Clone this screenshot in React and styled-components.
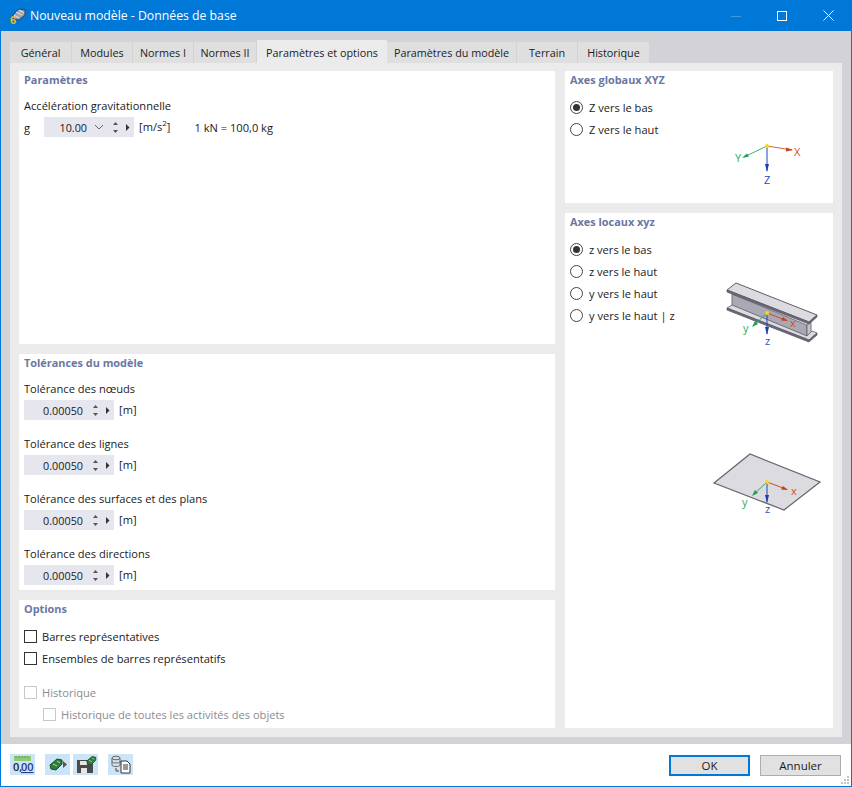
import React from "react";
import styled, { createGlobalStyle } from "styled-components";

const Global = createGlobalStyle`
  html, body { margin: 0; padding: 0; background: #fff; }
  * { box-sizing: border-box; }
`;

const Window = styled.div`
  width: 852px;
  height: 787px;
  display: flex;
  flex-direction: column;
  border: 1px solid #0078d7;
  border-top: none;
  font-family: "Open Sans", "Noto Sans", sans-serif;
  font-size: 11.1px;
  color: #1a1a1a;
  overflow: hidden;
`;

const TitleBar = styled.div`
  height: 31px;
  flex: none;
  background: #0078d7;
  color: #fff;
  display: flex;
  align-items: center;
  padding-left: 8px;
  font-size: 12.25px;
`;

const TitleText = styled.span`
  margin-left: 3px;
  flex: 1;
`;

const WinButton = styled.div`
  width: 46px;
  height: 31px;
  display: flex;
  align-items: center;
  justify-content: center;
`;

const Body = styled.div`
  flex: 1;
  background: #d3d2d6;
  padding: 9px 9px 7px;
  display: flex;
  flex-direction: column;
`;

const Tabs = styled.div`
  display: flex;
  align-items: flex-end;
  height: 23px;
  flex: none;
`;

const Tab = styled.div`
  width: ${(p) => p.$w}px;
  height: ${(p) => (p.$active ? 24 : 21)}px;
  margin-right: ${(p) => (p.$active ? 0 : 1)}px;
  margin-bottom: ${(p) => (p.$active ? -1 : 0)}px;
  background: ${(p) => (p.$active ? "#ebebeb" : "#dfdfe0")};
  display: flex;
  align-items: center;
  justify-content: center;
  font-size: 10.8px;
  color: #222;
  position: relative;
`;

const TabPanel = styled.div`
  flex: 1;
  background: #ebebeb;
  padding: 8px 9px 9px;
  display: grid;
  grid-template-columns: 536px 268px;
  column-gap: 10px;
`;

const Column = styled.div`
  display: flex;
  flex-direction: column;
  gap: 10px;
  min-height: 0;
`;

const Panel = styled.section`
  background: #fff;
  height: ${(p) => (p.$h ? `${p.$h}px` : "auto")};
  flex: ${(p) => (p.$h ? "none" : 1)};
  padding: 1px 5px 0;
  display: flow-root;
`;

const PanelTitle = styled.h3`
  margin: 0;
  font-size: 10.9px;
  line-height: 15px;
  font-weight: 700;
  color: #6a77a3;
`;

const FieldLabel = styled.div`
  line-height: 16px;
  margin-top: ${(p) => p.$top}px;
`;

const FieldRow = styled.div`
  display: flex;
  align-items: center;
  height: 20px;
  margin-top: 3px;
`;

const GravLetter = styled.span`
  width: 20px;
`;

const Spin = styled.div`
  width: 90px;
  height: 20px;
  background: #e6e6ef;
  display: flex;
  align-items: center;
  position: relative;
`;

const SpinValue = styled.span`
  position: absolute;
  right: ${(p) => p.$right}px;
  top: 2px;
  line-height: 17px;
  font-size: 10.8px;
`;

const SpinIcon = styled.svg`
  position: absolute;
  left: ${(p) => p.$x}px;
  top: 0;
`;

const Unit = styled.span`
  margin-left: 5px;
  line-height: 20px;

  sup {
    font-size: 8px;
    line-height: 0;
  }
`;

const Conversion = styled.span`
  margin-left: 24px;
`;

const OptionList = styled.div`
  margin-top: ${(p) => p.$top}px;
  display: flex;
  flex-direction: column;
  gap: 6px;
`;

const OptionRow = styled.label`
  display: flex;
  align-items: center;
  height: 16px;
  color: ${(p) => (p.$off ? "#8b8b8f" : "#1a1a1a")};
  margin-left: ${(p) => (p.$indent ? 19 : 0)}px;
  margin-top: ${(p) => p.$gap || 0}px;
`;

const Radio = styled.span`
  width: 13px;
  height: 13px;
  border-radius: 50%;
  border: 1px solid #444;
  margin-right: 6px;
  display: flex;
  align-items: center;
  justify-content: center;
  flex: none;

  &::after {
    content: "";
    display: ${(p) => (p.$on ? "block" : "none")};
    width: 7px;
    height: 7px;
    border-radius: 50%;
    background: #333;
  }
`;

const Check = styled.span`
  width: 13px;
  height: 13px;
  border: 1px solid ${(p) => (p.$off ? "#c8c8c8" : "#333")};
  margin-right: 5px;
  flex: none;
`;

const AxesRow = styled.div`
  display: flex;
  justify-content: flex-end;
  margin-top: 2px;
  padding-right: 23px;
`;

const LocalBody = styled.div`
  display: flex;
  justify-content: space-between;
`;

const Drawings = styled.div`
  display: flex;
  flex-direction: column;
  align-items: flex-end;
  margin-right: 7px;
  padding-top: 53px;
  gap: 103px;
`;

const Footer = styled.div`
  height: 42px;
  flex: none;
  display: flex;
  align-items: flex-start;
  padding: 10px 10px 0 9px;
  position: relative;
`;

const ToolButton = styled.div`
  width: 25px;
  height: 21px;
  background: #cce4f7;
  margin-right: ${(p) => p.$mr}px;
  display: flex;
  align-items: center;
  justify-content: center;
`;

const Spacer = styled.div`
  flex: 1;
`;

const DialogButton = styled.button`
  width: 81px;
  height: 21px;
  margin-top: 1px;
  margin-left: ${(p) => p.$ml || 0}px;
  padding: 0;
  background: #e1e1e1;
  border: ${(p) => (p.$primary ? "2px solid #0078d7" : "1px solid #adadad")};
  font: inherit;
  font-size: 11.5px;
  color: #1a1a1a;
`;

const Grip = styled.svg`
  position: absolute;
  right: 1px;
  bottom: 1px;
`;

const SpinArrows = ({ x }) => (
  <SpinIcon $x={x} width="20" height="20" viewBox="0 0 20 20">
    <path d="M3 8 L5.5 5 L8 8Z" fill="#555" />
    <path d="M3 13 L8 13 L5.5 16Z" fill="#555" />
    <path d="M16 7 L16 14 L19.5 10.5Z" fill="#333" />
  </SpinIcon>
);

const SpinField = ({ value }) => (
  <Spin>
    <SpinValue $right={31}>{value}</SpinValue>
    <SpinArrows x={66} />
  </Spin>
);

const Tolerance = ({ label, top }) => (
  <>
    <FieldLabel $top={top}>{label}</FieldLabel>
    <FieldRow>
      <SpinField value="0.00050" />
      <Unit>[m]</Unit>
    </FieldRow>
  </>
);

const AppIcon = () => (
  <svg width="18" height="18" viewBox="0 0 18 18">
    <path d="M4 8 L10 2 L16 3 L16 8 L10 13 L4 12Z" fill="#9ca3ad" stroke="#3c3f46" strokeWidth="1" />
    <path d="M7 5 L13 8 M10 3 L15 6 M5 8 L10 11" stroke="#e5e7ea" strokeWidth="1" fill="none" />
    <text x="1" y="17" fontSize="11" fontWeight="700" fill="#eebb22" fontFamily="Liberation Sans, sans-serif">6</text>
  </svg>
);

const Marker = ({ x, y }) => <circle cx={x} cy={y} r="2" fill="#f6d90f" />;

const GlobalAxes = () => (
  <svg width="72" height="48" viewBox="0 0 72 48">
    <path d="M34 7 L59 11" stroke="#c9663f" strokeWidth="1" />
    <path d="M60 11 L53 8.5 L53 12.5Z" fill="#c8401a" />
    <path d="M34 7 L11 18" stroke="#3fb36a" strokeWidth="1" />
    <path d="M9 19 L14 14.5 L16 17.5Z" fill="#1e9e50" />
    <path d="M34 7 L34 32" stroke="#2347b5" strokeWidth="1" />
    <path d="M34 33 L32 25 L36 25Z" fill="#1c3fb0" />
    <Marker x={34} y={7} />
    <text x="61" y="17" fontSize="11" fill="#d0502a" fontFamily="Open Sans, sans-serif">X</text>
    <text x="2" y="23" fontSize="11" fill="#33a860" fontFamily="Open Sans, sans-serif">Y</text>
    <text x="31" y="45" fontSize="11" fill="#2a50c0" fontFamily="Open Sans, sans-serif">Z</text>
  </svg>
);

const BeamDrawing = () => (
  <svg width="97" height="68" viewBox="0 0 97 68">
    <path d="M8 12 L8 26 L83 56 L83 43Z" fill="#a9a8b5" stroke="#5d5c68" strokeWidth="0.8" />
    <path d="M83 43 L87 40 L87 54 L83 56Z" fill="#c5c4cc" stroke="#5d5c68" strokeWidth="0.8" />
    <path d="M3 26 L8 23 L83 54 L88 49 L93 51 L85 58Z" fill="#dcdbe0" stroke="#5d5c68" strokeWidth="0.8" />
    <path d="M3 26 L3 28 L85 60 L93 53 L93 51 L85 58Z" fill="#6a6975" stroke="#5d5c68" strokeWidth="0.8" />
    <path d="M3 8 L12 1 L93 33 L85 40Z" fill="#dcdbe0" stroke="#5d5c68" strokeWidth="1" />
    <path d="M3 8 L3 10 L85 42 L93 35 L93 33 L85 40Z" fill="#6a6975" stroke="#5d5c68" strokeWidth="0.8" />
    <path d="M43 31 L63 38.5" stroke="#c9502a" strokeWidth="1" />
    <path d="M64 39 L57 38.5 L59 35Z" fill="#c8401a" />
    <path d="M43 31 L29 44" stroke="#2fa860" strokeWidth="1" />
    <path d="M28 45 L31 39 L34 42Z" fill="#1e9e50" />
    <path d="M43 31 L43 52" stroke="#2347b5" strokeWidth="1" />
    <path d="M43 53 L41 45 L45 45Z" fill="#1c3fb0" />
    <Marker x={43} y={31} />
    <text x="66" y="45" fontSize="11" fill="#d0502a" fontFamily="Open Sans, sans-serif">x</text>
    <text x="19" y="50" fontSize="11" fill="#33a860" fontFamily="Open Sans, sans-serif">y</text>
    <text x="41" y="63" fontSize="11" fill="#2a50c0" fontFamily="Open Sans, sans-serif">z</text>
  </svg>
);

const PlateDrawing = () => (
  <svg width="108" height="64" viewBox="0 0 108 64">
    <path d="M1 30 L37 1 L107 29 L71 57Z" fill="#dcdbe0" stroke="#65646f" strokeWidth="1.2" />
    <path d="M54 29 L74 36.5" stroke="#c9502a" strokeWidth="1" />
    <path d="M75 37 L68 36.5 L70 33Z" fill="#c8401a" />
    <path d="M54 29 L40 42" stroke="#2fa860" strokeWidth="1" />
    <path d="M39 43 L42 37 L45 40Z" fill="#1e9e50" />
    <path d="M54 29 L54 49" stroke="#2347b5" strokeWidth="1" />
    <path d="M54 50 L52 42 L56 42Z" fill="#1c3fb0" />
    <Marker x={54} y={29} />
    <text x="78" y="42" fontSize="11" fill="#d0502a" fontFamily="Open Sans, sans-serif">x</text>
    <text x="29" y="53" fontSize="11" fill="#33a860" fontFamily="Open Sans, sans-serif">y</text>
    <text x="52" y="60" fontSize="11" fill="#2a50c0" fontFamily="Open Sans, sans-serif">z</text>
  </svg>
);

const NumberIcon = () => (
  <svg width="25" height="21" viewBox="0 0 25 21">
    <rect x="4" y="2" width="17" height="5" fill="#8fca78" />
    <path d="M6 2v2M9 2v2M12 2v2M15 2v2M18 2v2" stroke="#5c9a50" strokeWidth="1" />
    <text x="3" y="17" fontSize="11" fontWeight="600" fill="#223" fontFamily="Open Sans, sans-serif">0,</text>
    <text x="11" y="17" fontSize="11" fontWeight="600" fill="#223a90" textDecoration="underline" fontFamily="Open Sans, sans-serif">00</text>
  </svg>
);

const ModelGlyph = ({ x = 0, y = 0, s = 1 }) => (
  <g transform={`translate(${x} ${y}) scale(${s})`}>
    <path d="M1 8 L8 2 L13 3 L13 7 L7 13 L2 12Z" fill="#2f7d3a" stroke="#1d4a24" strokeWidth="1" />
    <path d="M4 7 L8 9 M8 4 L11 6" stroke="#bcd9b6" strokeWidth="1" />
  </g>
);

const ImportIcon = () => (
  <svg width="25" height="21" viewBox="0 0 25 21">
    <ModelGlyph x={4} y={3} />
    <path d="M18 7 L18 14 L22 10.5Z" fill="#555" />
  </svg>
);

const SaveIcon = () => (
  <svg width="25" height="21" viewBox="0 0 25 21">
    <path d="M4 6 H17 L20 9 V19 H4Z" fill="#4a4a4a" />
    <rect x="7" y="7" width="7" height="4" fill="#e6e6e6" />
    <rect x="8" y="14" width="6" height="5" fill="#e6e6e6" />
    <ModelGlyph x={13} y={1} s={0.75} />
  </svg>
);

const DataIcon = () => (
  <svg width="25" height="21" viewBox="0 0 25 21">
    <ellipse cx="8" cy="4" rx="4" ry="1.8" fill="#ddd" stroke="#666" />
    <path d="M4 4 V11 C4 13 12 13 12 11 V4 M4 7.5 C4 9.5 12 9.5 12 7.5" fill="none" stroke="#666" />
    <path d="M8 14 V17 H11" fill="none" stroke="#444" />
    <path d="M13 7 H19 L22 10 V19 H13Z" fill="#fff" stroke="#333" />
    <path d="M15 11 H20 M15 13 H20 M15 15 H20" stroke="#333" />
  </svg>
);

const App = () => {
  const tabs = [
    ["Général", 61],
    ["Modules", 60],
    ["Normes I", 60],
    ["Normes II", 62],
    ["Paramètres et options", 130, true],
    ["Paramètres du modèle", 129],
    ["Terrain", 60],
    ["Historique", 71],
  ];

  return (
    <Window>
      <Global />
      <TitleBar>
        <AppIcon />
        <TitleText>Nouveau modèle - Données de base</TitleText>
        <WinButton>
          <svg width="10" height="10" viewBox="0 0 10 10"><path d="M0 5.5H10" stroke="#3f9be2" /></svg>
        </WinButton>
        <WinButton>
          <svg width="10" height="10" viewBox="0 0 10 10"><rect x="0.5" y="0.5" width="9" height="9" fill="none" stroke="#fff" /></svg>
        </WinButton>
        <WinButton>
          <svg width="11" height="11" viewBox="0 0 11 11"><path d="M0.5 0.5L10.5 10.5M10.5 0.5L0.5 10.5" stroke="#fff" /></svg>
        </WinButton>
      </TitleBar>

      <Body>
        <Tabs>
          {tabs.map(([label, w, active]) => (
            <Tab key={label} $w={w} $active={active}>{label}</Tab>
          ))}
        </Tabs>
        <TabPanel>
          <Column>
            <Panel $h={273}>
              <PanelTitle>Paramètres</PanelTitle>
              <FieldLabel $top={11}>Accélération gravitationnelle</FieldLabel>
              <FieldRow>
                <GravLetter>g</GravLetter>
                <Spin>
                  <SpinValue $right={47}>10.00</SpinValue>
                  <SpinIcon $x={50} width="12" height="20" viewBox="0 0 12 20">
                    <path d="M1 8 L5 12 L9 8" fill="none" stroke="#666" />
                  </SpinIcon>
                  <SpinArrows x={66} />
                </Spin>
                <Unit>[m/s<sup>2</sup>]</Unit>
                <Conversion>1 kN = 100,0 kg</Conversion>
              </FieldRow>
            </Panel>

            <Panel $h={236}>
              <PanelTitle>Tolérances du modèle</PanelTitle>
              <Tolerance label="Tolérance des nœuds" top={11} />
              <Tolerance label="Tolérance des lignes" top={16} />
              <Tolerance label="Tolérance des surfaces et des plans" top={16} />
              <Tolerance label="Tolérance des directions" top={16} />
            </Panel>

            <Panel>
              <PanelTitle>Options</PanelTitle>
              <OptionList $top={12}>
                <OptionRow><Check />Barres représentatives</OptionRow>
                <OptionRow><Check />Ensembles de barres représentatifs</OptionRow>
                <OptionRow $off $gap={12}><Check $off />Historique</OptionRow>
                <OptionRow $off $indent><Check $off />Historique de toutes les activités des objets</OptionRow>
              </OptionList>
            </Panel>
          </Column>

          <Column>
            <Panel $h={132}>
              <PanelTitle>Axes globaux XYZ</PanelTitle>
              <OptionList $top={12}>
                <OptionRow><Radio $on />Z vers le bas</OptionRow>
                <OptionRow><Radio />Z vers le haut</OptionRow>
              </OptionList>
              <AxesRow><GlobalAxes /></AxesRow>
            </Panel>

            <Panel>
              <PanelTitle>Axes locaux xyz</PanelTitle>
              <LocalBody>
                <OptionList $top={12}>
                  <OptionRow><Radio $on />z vers le bas</OptionRow>
                  <OptionRow><Radio />z vers le haut</OptionRow>
                  <OptionRow><Radio />y vers le haut</OptionRow>
                  <OptionRow><Radio />y vers le haut | z</OptionRow>
                </OptionList>
                <Drawings>
                  <BeamDrawing />
                  <PlateDrawing />
                </Drawings>
              </LocalBody>
            </Panel>
          </Column>
        </TabPanel>
      </Body>

      <Footer>
        <ToolButton $mr={10}><NumberIcon /></ToolButton>
        <ToolButton $mr={3}><ImportIcon /></ToolButton>
        <ToolButton $mr={10}><SaveIcon /></ToolButton>
        <ToolButton $mr={0}><DataIcon /></ToolButton>
        <Spacer />
        <DialogButton $primary>OK</DialogButton>
        <DialogButton $ml={10}>Annuler</DialogButton>
        <Grip width="10" height="10" viewBox="0 0 10 10">
          <path d="M7 1h2v2h-2zM4 4h2v2h-2zM7 4h2v2h-2zM1 7h2v2h-2zM4 7h2v2h-2zM7 7h2v2h-2z" fill="#c4c4c4" />
        </Grip>
      </Footer>
    </Window>
  );
};

export default App;
